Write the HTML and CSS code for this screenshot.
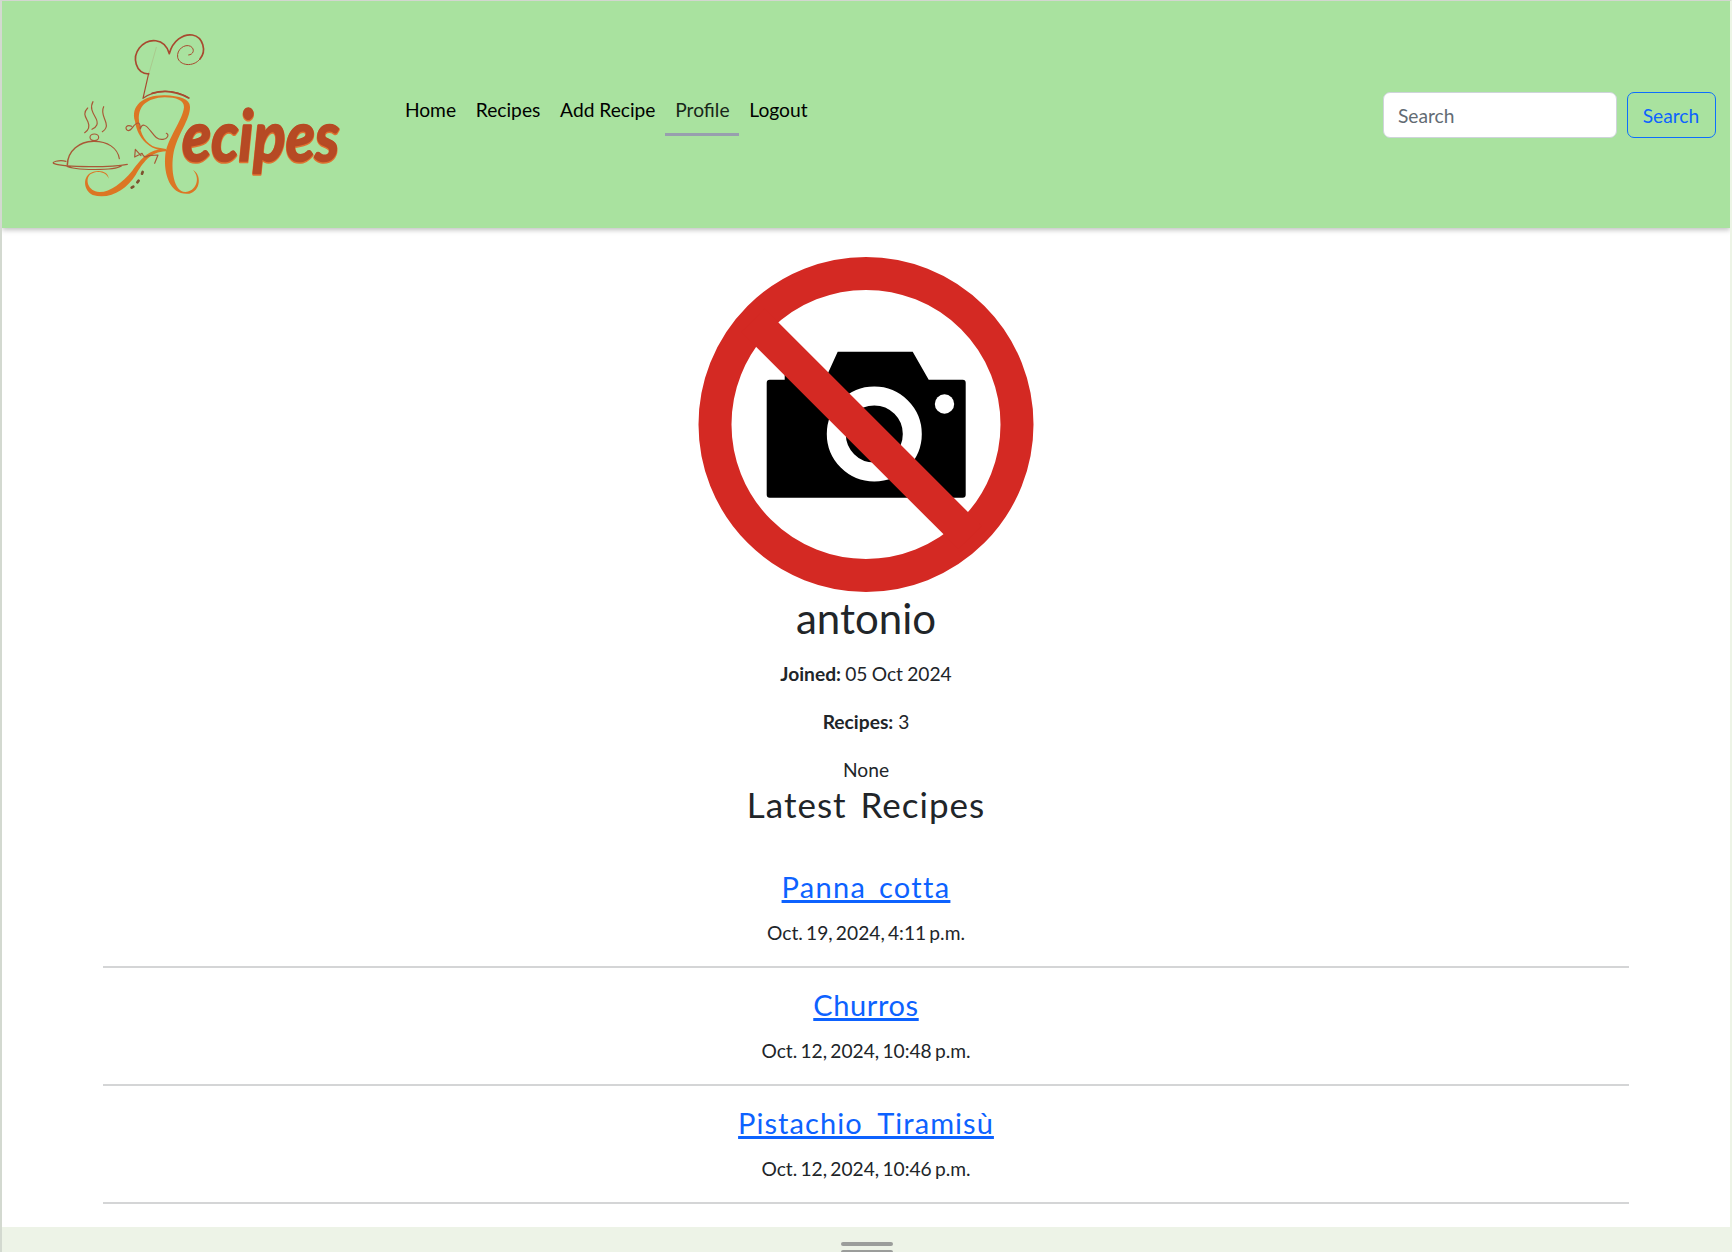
FILE: index.html
```
<!DOCTYPE html>
<html lang="en">
<head>
<meta charset="utf-8">
<title>Recipes - Profile</title>
<link rel="stylesheet" href="styles.css">
</head>
<body>
<div class="page">
  <header class="navbar">
    <a class="brand" aria-label="Recipes">
      <svg class="logo" viewBox="0 0 930 570" fill="none" stroke-linecap="round" stroke-linejoin="round">
        <g stroke="#a8492f">
          <path stroke-width="5" d="M326 162C286 160 276 112 298 84C324 52 374 52 388 101C398 62 430 41 457 45C490 51 500 93 480 117"/>
          <path stroke-width="3" d="M480 117C460 143 418 137 413 112C409 89 434 70 452 79C466 88 460 104 446 105"/>
          <path stroke-width="3.5" d="M326 160L309 235C346 207 405 207 447 234"/>
          <path stroke-width="5" d="M336 220C375 208 410 214 446 234"/>
          <path stroke-width="1" opacity=".5" d="M327 160L349 82"/>
        </g>
        <g fill="#dc7624">
          <path d="M285 304C271 258 309 225 374 226C418 227 450 238 450 260C451 298 412 344 401 397C391 449 402 516 436 516C466 515 484 477 459 450C485 463 483 513 448 521C396 528 369 472 376 403C383 354 428 301 432 262C433 241 409 232 374 232C320 234 293 259 297 302C299 342 319 373 348 382L378 387V393C331 392 292 356 285 304Z"/>
          <path d="M378 387C325 387 306 414 277 452C246 489 209 517 178 516C144 514 133 478 152 462C174 449 201 458 206 476C206 454 174 446 150 460C127 475 132 512 158 525C209 540 258 510 287 465C308 430 330 395 378 394Z"/>
        </g>
        <g stroke="#a95836" stroke-width="3.500">
          <path d="M275 319C260 313 253 324 262 331C274 339 280 308 295 309C302 310 300 325 301 327C306 309 318 315 327 327C340 343 350 361 369 358C382 357 389 344 379 340"/>
          <path d="M286 388L284 411L306 400C310 410 316 414 325 407L354 405L344 430M286 388L303 407"/>
          <path d="M143 264C127 280 137 291 144 306C150 320 145 331 134 338M159 245C149 262 158 278 166 292C178 312 169 322 156 328M191 260C182 277 193 291 198 309C202 323 195 330 187 335"/>
          <ellipse cx="163" cy="352" rx="13" ry="10"/>
          <path stroke-width="4.500" d="M82 435C83 391 119 365 160 364"/>
          <path d="M160 364C202 363 233 384 238 416M78 424C58 418 30 427 43 431C75 443 218 442 262 433M78 437C103 452 223 452 244 438"/>
        </g>
        <path stroke="#7e512e" stroke-width="8" d="M308 456L306 461M296 482L292 487M280 500L275 503"/>
        <text class="wordmark glow" x="426" y="427" textLength="472" lengthAdjust="spacingAndGlyphs">ecipes</text>
        <text class="wordmark" x="426" y="424" textLength="472" lengthAdjust="spacingAndGlyphs">ecipes</text>
      </svg>
    </a>
    <nav class="links">
      <a>Home</a><a>Recipes</a><a>Add Recipe</a><a class="active">Profile</a><a>Logout</a>
    </nav>
    <form class="search">
      <input type="search" placeholder="Search" aria-label="Search">
      <button type="button">Search</button>
    </form>
  </header>
  <main class="profile">
    <svg class="avatar" viewBox="0 0 336 336">
      <path transform="translate(6.700 2.700)" d="M62 121H80V115H123L133 93H208L224 121H258Q261 121 261 124V236Q261 239 258 239H65Q62 239 62 236V124Q62 121 65 121Z"/>
      <circle cx="176.300" cy="178" r="38" fill="none" stroke="#fff" stroke-width="19"/>
      <circle cx="246.500" cy="148" r="9.700" fill="#fff"/>
      <g fill="none" stroke="#d42923" stroke-width="33">
        <circle cx="168" cy="168.400" r="151"/>
        <path d="M55 64.400L272 281.400"/>
      </g>
    </svg>
    <h1>antonio</h1>
    <p class="joined"><strong>Joined:</strong> 05 Oct 2024</p>
    <p><strong>Recipes:</strong> 3</p>
    <p class="bio">None</p>
    <h2>Latest Recipes</h2>
    <section class="recipes">
      <article><h3><a class="panna">Panna cotta</a></h3><p>Oct. 19, 2024, 4:11 p.m.</p></article>
      <article><h3><a class="churros">Churros</a></h3><p>Oct. 12, 2024, 10:48 p.m.</p></article>
      <article><h3><a class="tiramisu">Pistachio Tiramisù</a></h3><p>Oct. 12, 2024, 10:46 p.m.</p></article>
    </section>
  </main>
  <footer class="drawer"><i></i><i></i></footer>
</div>
</body>
</html>
```
FILE: styles.css
```
* { box-sizing: border-box; }
body { margin: 0; background: #edf3e7; font: 19.2px/29px Lato, sans-serif; color: #212529; }
.page { height: 1252px; overflow: hidden; border-top: 1px solid #d3d6d0; border-left: 2px solid #d3d9d0; border-right: 2px solid #edf4e6; display: flex; flex-direction: column; }
.navbar { position: relative; flex: none; height: 227px; padding: 0 14px 0 38px; display: flex; align-items: center; background: #a9e29f; box-shadow: 0 2px 5px rgba(0,0,0,.25); }
.logo { display: block; width: 310px; height: 190px; overflow: visible; }
.wordmark { font: italic 700 212px/1 Lato, sans-serif; fill: #b64a24; stroke: #b64a24; stroke-width: 5px; }
.glow { fill: #df7330; stroke: #df7330; stroke-width: 8px; }
.links { display: flex; margin: -3px 0 0 45px; color: #000; }
.links a { height: 46px; padding: 5px 9.900px 0; border-bottom: 3px solid transparent; }
.links .active { border-color: #989fae; color: #18261a; }
.search { display: flex; gap: 10px; margin-left: auto; }
.search input, .search button { height: 46px; font: inherit; border-radius: 7px; }
.search input { width: 234px; padding: 1px 14px 0; border: 1px solid #ced4da; background: #fff; }
.search input::placeholder { color: #626b73; opacity: 1; }
.search button { width: 89px; padding: 1px 1px 0 0; border: 1.200px solid #0d6efd; background: transparent; color: #0d62ff; }
.profile { flex: none; height: 999px; padding: 28px 101px 0; display: flex; flex-direction: column; align-items: center; background: #fff; }
.avatar { flex: none; width: 336px; height: 336px; }
h1, h2, h3 { margin: 0; font-family: Lato, sans-serif; font-weight: 400; white-space: nowrap; }
h1 { height: 67px; font-size: 42px; line-height: 52px; }
h2 { font-size: 35px; line-height: 40px; letter-spacing: 1px; word-spacing: 4px; }
h3 { font-size: 29px; line-height: 34px; }
p { margin: 0 0 19px; }
.joined { word-spacing: -.7px; }
.bio { margin: 0; }
.recipes { align-self: stretch; margin-top: 46px; text-align: center; }
article { height: 118px; border-bottom: 2px solid #d4d5d6; }
article + article { padding-top: 20px; }
article:first-child { height: 98px; }
article p { margin: 14px 0 0; word-spacing: -1.700px; }
h3 a { color: #0d62ff; text-decoration: underline; text-decoration-thickness: 3px; text-underline-offset: 2px; text-decoration-skip-ink: none; }
.panna { letter-spacing: 1.300px; word-spacing: 4px; }
.churros { letter-spacing: .6px; }
.tiramisu { letter-spacing: 1.050px; word-spacing: 7px; }
.drawer { flex: 1; display: flex; flex-direction: column; align-items: center; gap: 4px; padding: 15px 0 0 2px; overflow: hidden; }
.drawer i { flex: none; width: 52px; height: 4px; border-radius: 2px; background: #9b9d9b; }
```
